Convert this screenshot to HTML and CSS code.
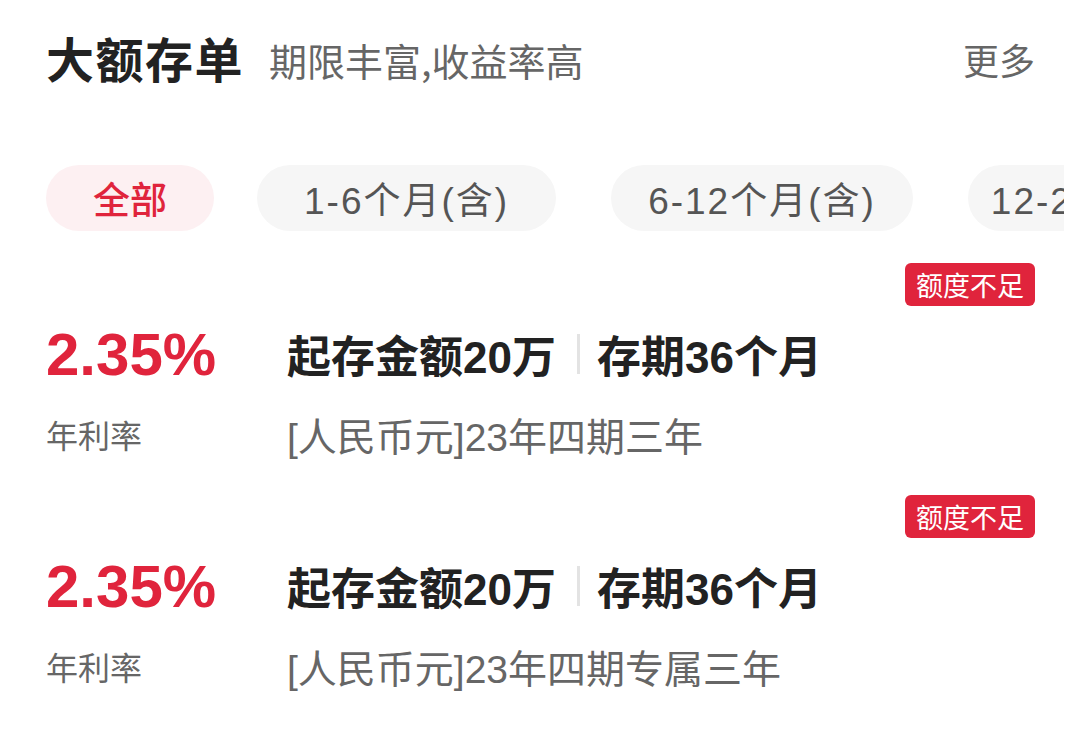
FILE: index.html
```html
<!DOCTYPE html>
<html lang="zh-CN">
<head>
<meta charset="utf-8">
<link rel="stylesheet" href="styles.css">
</head>
<body>
<div class="page">
  <header class="head">
    <h1 class="title">大额存单</h1>
    <span class="subtitle">期限丰富,收益率高</span>
    <span class="more">更多</span>
  </header>
  <div class="tabs">
    <span class="tab active">全部</span>
    <span class="tab t2">1-6个月(含)</span>
    <span class="tab t3">6-12个月(含)</span>
    <span class="tab t4">12-24个月(含)</span>
  </div>
  <div class="item">
    <div class="badge-row"><span class="badge">额度不足</span></div>
    <div class="main-row">
      <span class="rate">2.35%</span>
      <span class="info"><span>起存金额20万</span><i class="sep"></i><span>存期36个月</span></span>
    </div>
    <div class="sub-row">
      <span class="label">年利率</span>
      <span class="name">[人民币元]23年四期三年</span>
    </div>
  </div>
  <div class="item">
    <div class="badge-row"><span class="badge">额度不足</span></div>
    <div class="main-row">
      <span class="rate">2.35%</span>
      <span class="info"><span>起存金额20万</span><i class="sep"></i><span>存期36个月</span></span>
    </div>
    <div class="sub-row">
      <span class="label">年利率</span>
      <span class="name">[人民币元]23年四期专属三年</span>
    </div>
  </div>
</div>
</body>
</html>
```

FILE: styles.css
```css
html, body {
  margin: 0;
  padding: 0;
  background: #ffffff;
}
body {
  font-family: "Liberation Sans", "Noto Sans CJK SC", sans-serif;
  width: 1080px;
  height: 732px;
  overflow: hidden;
}
.page {
  padding: 0 45px 0 46px;
}
.head {
  display: flex;
  align-items: center;
  height: 114px;
}
.title {
  margin: 0;
  font-family: "Noto Sans CJK SC", sans-serif;
  font-size: 48px;
  font-weight: 700;
  color: #222;
  letter-spacing: 1.5px;
}
.subtitle {
  margin-left: 25px;
  font-family: "Noto Sans CJK SC", sans-serif;
  font-size: 38px;
  color: #666;
  padding-top: 4px;
}
.more {
  margin-left: auto;
  font-family: "Noto Sans CJK SC", sans-serif;
  font-size: 36px;
  color: #666;
  padding-top: 4px;
}
.tabs {
  display: flex;
  margin-top: 51px;
  margin-right: -29px;
  overflow: hidden;
  white-space: nowrap;
  height: 66px;
}
.tab {
  flex: none;
  display: flex;
  align-items: center;
  height: 66px;
  padding: 0 47px;
  border-radius: 33px;
  background: #f6f6f6;
  color: #555;
  font-size: 37px;
  letter-spacing: 2px;
  margin-right: 55px;
}
.tab.t3 {
  padding: 0 37px;
}
.tab.t4 {
  padding: 0 23px;
}
.tab.active {
  background: #fdf0f2;
  color: #e0243c;
  font-weight: 500;
  font-size: 37px;
  letter-spacing: 0;
  font-family: "Noto Sans CJK SC", sans-serif;
  margin-right: 43px;
}
.item {
  display: flex;
  flex-direction: column;
}
.badge-row {
  display: flex;
  justify-content: flex-end;
  margin-top: 32px;
}
.item + .item .badge-row {
  margin-top: 36px;
}
.badge {
  background: #e0243c;
  color: #fff;
  font-family: "Noto Sans CJK SC", sans-serif;
  font-size: 27px;
  line-height: 43px;
  height: 43px;
  padding: 0 11px;
  border-radius: 6px;
}
.main-row {
  display: flex;
  align-items: center;
  height: 70px;
  margin-top: 13px;
}
.rate {
  width: 241px;
  font-size: 60px;
  font-weight: 700;
  color: #e0243c;
}
.info {
  display: flex;
  align-items: center;
  font-size: 44px;
  font-weight: 700;
  color: #222;
}
.sep {
  display: block;
  width: 3px;
  height: 40px;
  background: #e3e3e3;
  margin: 0 17px 0 21px;
}
.sub-row {
  display: flex;
  align-items: center;
  margin-top: 20px;
  height: 50px;
}
.label {
  width: 241px;
  font-family: "Noto Sans CJK SC", sans-serif;
  font-size: 32px;
  color: #666;
}
.name {
  font-size: 39px;
  color: #666;
}
```
